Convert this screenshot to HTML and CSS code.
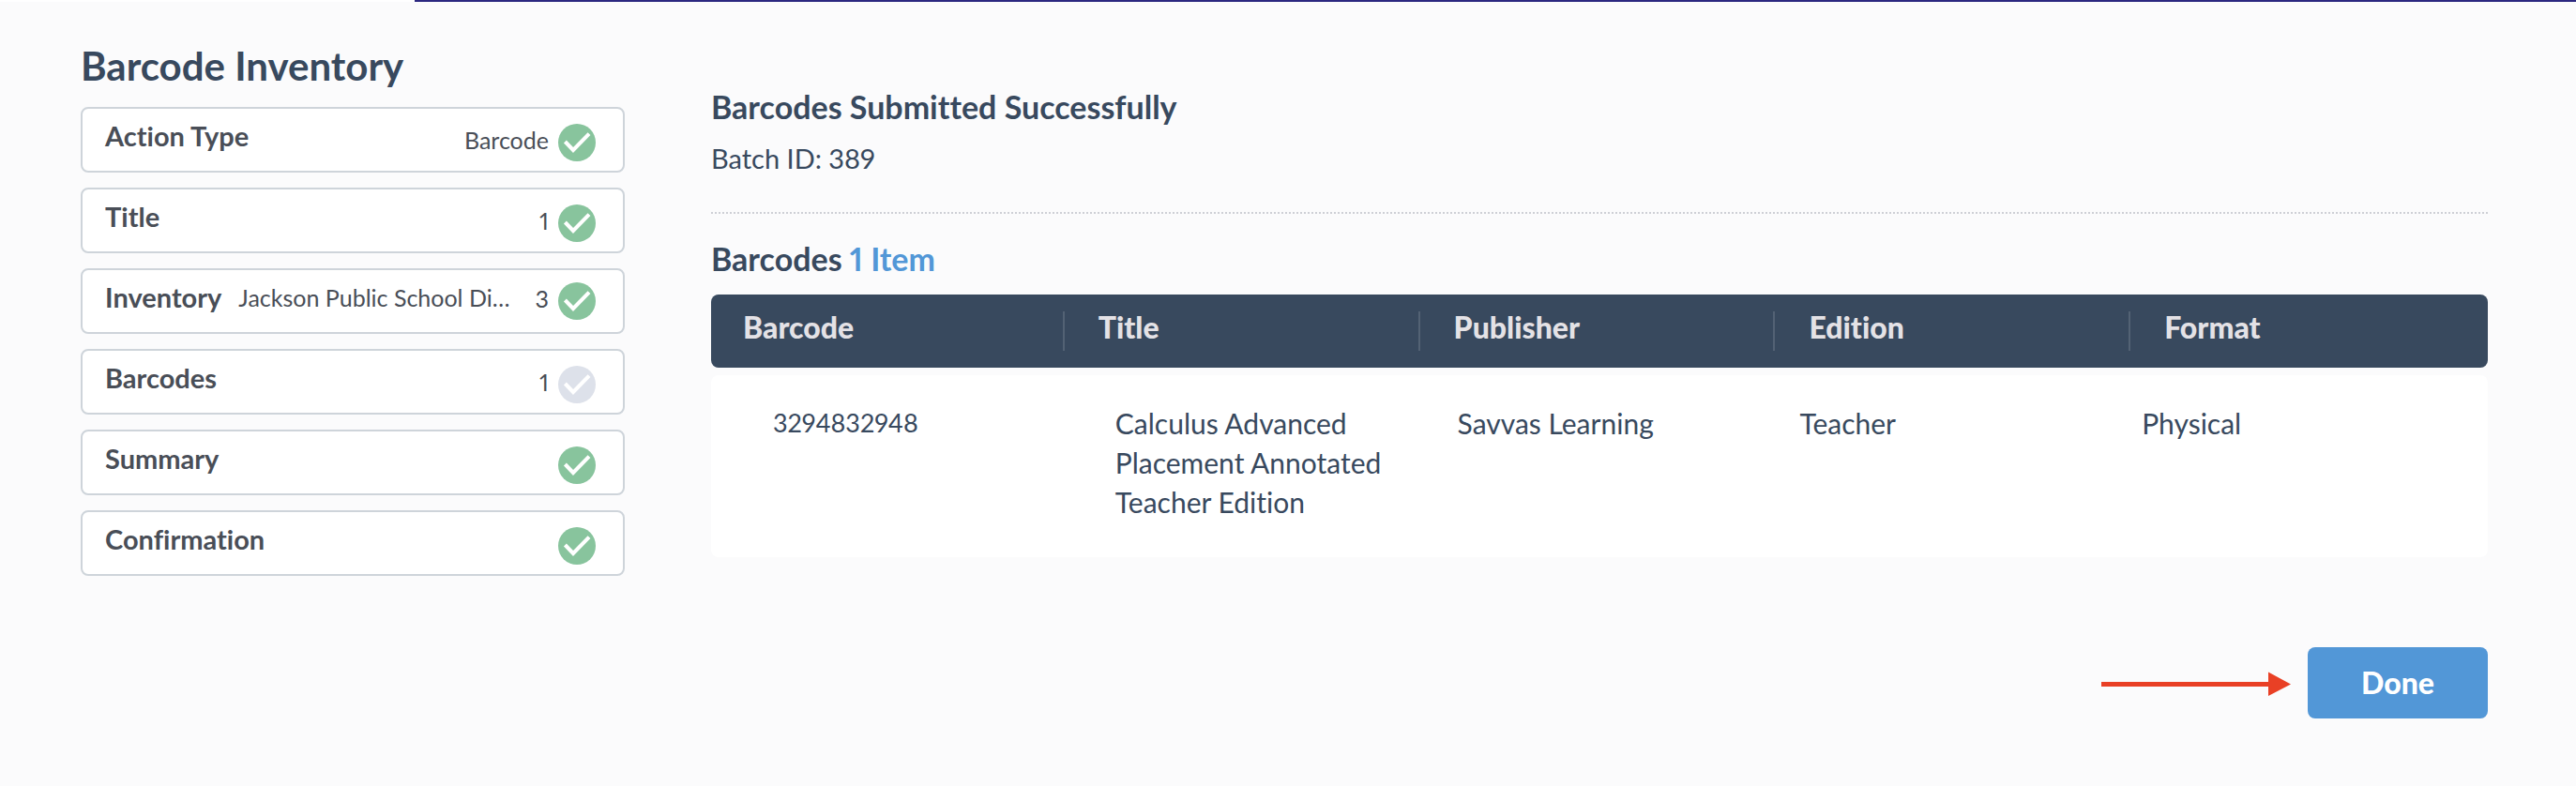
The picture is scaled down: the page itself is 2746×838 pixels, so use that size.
FILE: index.html
```html
<!DOCTYPE html>
<html lang="en">
<head>
<meta charset="utf-8">
<title>Barcode Inventory</title>
<link rel="stylesheet" href="styles.css">
</head>
<body>
<svg class="sprite" aria-hidden="true">
  <symbol id="check" viewBox="0 0 40 40">
    <circle cx="20" cy="20" r="20" fill="currentColor"/>
    <path d="M7.4 19 16 28 33 10.6" fill="none" stroke="#fff" stroke-width="4"/>
  </symbol>
</svg>
<div class="progress"><div class="progress-bar"></div></div>
<div class="layout">
  <aside class="sidebar">
    <h1 class="page-title">Barcode Inventory</h1>
    <ol class="steps">
      <li class="step"><span class="step-label">Action Type</span><span class="step-status"><span>Barcode</span><svg class="check"><use href="#check"/></svg></span></li>
      <li class="step"><span class="step-label">Title</span><span class="step-status"><span>1</span><svg class="check"><use href="#check"/></svg></span></li>
      <li class="step step-detailed"><span class="step-label">Inventory</span><span class="step-detail">Jackson Public School Di…</span><span class="step-status"><span>3</span><svg class="check"><use href="#check"/></svg></span></li>
      <li class="step"><span class="step-label">Barcodes</span><span class="step-status"><span>1</span><svg class="check check-pending"><use href="#check"/></svg></span></li>
      <li class="step"><span class="step-label">Summary</span><span class="step-status"><svg class="check"><use href="#check"/></svg></span></li>
      <li class="step"><span class="step-label">Confirmation</span><span class="step-status"><svg class="check"><use href="#check"/></svg></span></li>
    </ol>
  </aside>
  <main class="content">
    <h2 class="heading">Barcodes Submitted Successfully</h2>
    <p class="batch">Batch ID: 389</p>
    <hr class="divider">
    <h2 class="heading">Barcodes <span class="count">1 Item</span></h2>
    <table class="items">
      <thead>
        <tr class="items-head"><th>Barcode</th><th>Title</th><th>Publisher</th><th>Edition</th><th>Format</th></tr>
      </thead>
      <tbody>
        <tr class="items-row"><td class="number">3294832948</td><td>Calculus Advanced Placement Annotated Teacher Edition</td><td>Savvas Learning</td><td>Teacher</td><td>Physical</td></tr>
      </tbody>
    </table>
    <div class="actions">
      <svg class="arrow" viewBox="0 0 202 28" aria-hidden="true"><path d="M0 13H178V2.500L202 15.500 178 28V18H0Z" fill="#e94025"/></svg>
      <button class="done" type="button">Done</button>
    </div>
  </main>
</div>
</body>
</html>
```
FILE: styles.css
```css
* { box-sizing: border-box; }
body {
  margin: 0;
  background: #fbfbfc;
  color: #38495e;
  font-family: Lato, "Open Sans", sans-serif;
  font-size: 30px;
  line-height: 42px;
  font-variant-ligatures: none;
  font-variant-numeric: proportional-nums;
}
h1, h2, p, ol { margin: 0; padding: 0; }
.sprite { display: none; }
.progress { display: flex; height: 2px; background: #fff; }
.progress-bar { flex: 1; margin-left: 442px; background: #2c2880; }
.layout {
  display: grid;
  grid-template-columns: 580px 1fr;
  column-gap: 92px;
  padding: 44px 94px 72px 86px;
}
.page-title { font-size: 42px; line-height: 48px; font-weight: 700; margin-bottom: 20px; }
.steps { display: flex; flex-direction: column; gap: 16px; list-style: none; }
.step {
  display: flex;
  align-items: flex-start;
  min-height: 70px;
  padding: 12px 29px 0 24px;
  background: #fff;
  border: 2px solid #ced4da;
  border-radius: 8px;
  color: #494e57;
}
.step-label { font-size: 29px; font-weight: 700; line-height: 34px; }
.step-detail {
  margin-left: 18px;
  white-space: nowrap;
  font-size: 25px;
  line-height: 34px;
}
.step-status { display: flex; gap: 10px; margin: 4px 0 0 auto; font-size: 25px; line-height: 34px; }
.step-detailed .step-status { margin-top: 1px; }
.check { width: 40px; height: 40px; color: #88c49d; }
.check-pending { color: #dde1ea; }
.content { padding-top: 48px; }
.heading { font-size: 34px; line-height: 40px; font-weight: 700; }
.count { color: #5297d7; }
.batch { margin-top: 14px; font-size: 29px; }
.divider { height: 0; margin: 36px 0 28px; border: 0; border-top: 2px dotted #ced0d6; }
.items { display: block; margin-top: 18px; }
.items thead, .items tbody { display: block; }
.items-head, .items-row { display: grid; grid-template-columns: repeat(5, 1fr); border-radius: 8px; }
.items-head { padding: 18px 0; background: #38495e; color: #e4e2e6; }
.items-head th {
  height: 42px;
  margin-right: 2px;
  padding: 0 34px;
  text-align: left;
  font-size: 32px;
  font-weight: 900;
  line-height: 34px;
  border-right: 2px solid #536274;
}
.items-head th:last-child { border-right: 0; }
.items-row { margin-top: 8px; padding: 30px 35px 38px; background: #fff; }
.items-row td { padding: 0 16px 0 31px; }
.items-row .number { font-size: 27px; }
.actions { display: flex; justify-content: flex-end; align-items: center; gap: 18px; margin-top: 96px; }
.arrow { width: 202px; height: 28px; }
.done {
  width: 192px;
  height: 76px;
  padding: 0;
  border: 0;
  border-radius: 8px;
  background: #5297d7;
  color: #fff;
  font: 900 32px/40px Lato, "Open Sans", sans-serif;
}
```
